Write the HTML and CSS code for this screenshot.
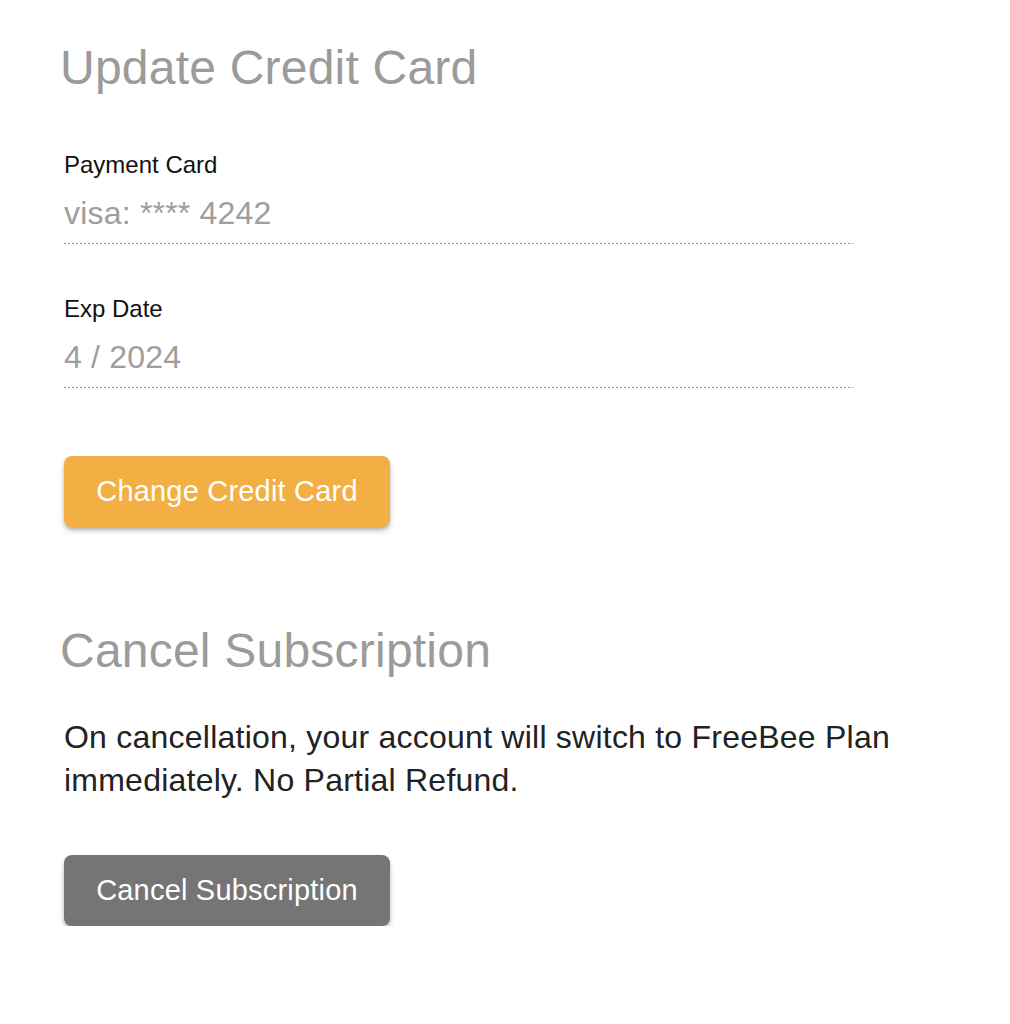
FILE: index.html
```html
<!DOCTYPE html>
<html lang="en">
<head>
<meta charset="utf-8">
<title>Billing</title>
<link rel="stylesheet" href="styles.css">
</head>
<body>
<main class="page">
  <section class="section">
    <h2 class="section-title">Update Credit Card</h2>
    <div class="field">
      <label class="field-label">Payment Card</label>
      <div class="field-value">visa: **** 4242</div>
    </div>
    <div class="field field-second">
      <label class="field-label">Exp Date</label>
      <div class="field-value">4 / 2024</div>
    </div>
    <button class="btn btn-primary" type="button">Change Credit Card</button>
  </section>
  <section class="section section-cancel">
    <h2 class="section-title">Cancel Subscription</h2>
    <p class="note">On cancellation, your account will switch to FreeBee Plan immediately. No Partial Refund.</p>
    <button class="btn btn-secondary" type="button">Cancel Subscription</button>
  </section>
</main>
</body>
</html>
```

FILE: styles.css
```css
html, body {
  margin: 0;
  padding: 0;
  background: #ffffff;
}

body {
  font-family: "Liberation Sans", Helvetica, Arial, sans-serif;
  color: #222222;
}

.page {
  padding: 40px 0 0 64px;
  display: flex;
  flex-direction: column;
}

.section {
  display: flex;
  flex-direction: column;
  align-items: flex-start;
}

.section-cancel {
  margin-top: 96px;
}

.section-title {
  margin: 0 0 0 -4px;
  font-size: 48px;
  line-height: 56px;
  font-weight: 400;
  letter-spacing: 0.22px;
  color: #9b9b9b;
}

.field {
  width: 789px;
  margin-top: 55px;
  display: flex;
  flex-direction: column;
  gap: 14px;
  padding-bottom: 11px;
  background-image: linear-gradient(to right, #8f8f8f 50%, transparent 50%);
  background-size: 4px 1px;
  background-repeat: repeat-x;
  background-position: left bottom;
}

.field-second {
  margin-top: 51px;
}

.field-label {
  font-size: 24px;
  line-height: 28px;
  color: #111111;
}

.field-value {
  font-size: 32px;
  line-height: 40px;
  letter-spacing: 0.2px;
  color: #9e9e9e;
}

.note {
  margin: 37px 0 0 0;
  max-width: 900px;
  font-size: 32px;
  line-height: 43px;
  letter-spacing: 0.23px;
  color: #222222;
}

.btn {
  height: 71px;
  width: 326px;
  padding: 0 32px;
  border: none;
  border-radius: 8px;
  font-family: "Liberation Sans", Helvetica, Arial, sans-serif;
  font-size: 29px;
  letter-spacing: 0.2px;
  color: #ffffff;
  box-shadow: 0 4px 6px -1px rgba(0, 0, 0, 0.28), 0 2px 3px rgba(0, 0, 0, 0.12);
  cursor: pointer;
}

.btn-primary {
  margin-top: 68px;
  background: #f3af43;
}

.btn-secondary {
  margin-top: 53px;
  background: #757575;
}
```
